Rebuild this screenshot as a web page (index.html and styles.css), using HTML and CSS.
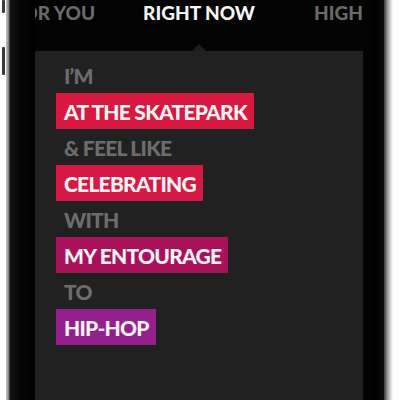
FILE: index.html
```html
<!DOCTYPE html>
<html>
<head>
<meta charset="utf-8">
<link rel="stylesheet" href="styles.css">
</head>
<body>
<div class="phone">
  <div class="btn btn-a"></div>
  <div class="btn btn-b"></div>
  <div class="edge-left"></div>
  <div class="bezel-left"></div>
  <div class="screen">
    <div class="header">
      <div class="tab-side tab-left"><span class="tab">FOR YOU</span></div>
      <div class="tab tab-active">RIGHT NOW</div>
      <div class="tab-side tab-right"><span class="tab">HIGHLIGHTS</span></div>
      <div class="pointer"></div>
    </div>
    <div class="content">
      <div class="row plain">I’M</div>
      <div class="row"><span class="chip red">AT THE SKATEPARK</span></div>
      <div class="row plain">&amp; FEEL LIKE</div>
      <div class="row"><span class="chip red2">CELEBRATING</span></div>
      <div class="row plain">WITH</div>
      <div class="row"><span class="chip berry">MY ENTOURAGE</span></div>
      <div class="row plain">TO</div>
      <div class="row"><span class="chip purple">HIP-HOP</span></div>
    </div>
  </div>
  <div class="bezel-right"></div>
  <div class="edge-right"></div>
</div>
</body>
</html>
```

FILE: styles.css
```css
html, body {
  margin: 0;
  padding: 0;
  background: #ffffff;
  overflow: hidden;
}

.phone {
  position: relative;
  display: flex;
  margin-left: 6px;
  width: 387px;
  height: 400px;
}

.btn {
  position: absolute;
  left: -4px;
  width: 3px;
  background: #3a3a3a;
  border-radius: 1px;
}
.btn-a { top: 0; height: 13px; }
.btn-b { top: 47px; height: 28px; }

.edge-left {
  width: 4px;
  background: linear-gradient(to right, #c8c8c8, #8a8a8a 60%, #2a2a2a);
}
.bezel-left {
  width: 25px;
  background: linear-gradient(to right, #151515, #050505 40%, #000000);
}
.bezel-right {
  width: 21px;
  background: linear-gradient(to right, #050505, #000000 60%, #0c0c0c);
}
.edge-right {
  width: 9px;
  background: linear-gradient(to right, #3a3a3a, #9a9a9a 40%, #d8d8d8 75%, #ffffff);
}

.screen {
  width: 328px;
  display: flex;
  flex-direction: column;
  background: #212121;
  overflow: hidden;
  font-family: Lato, "Liberation Sans", sans-serif;
  font-weight: 900;
}

.header {
  position: relative;
  height: 51px;
  background: #030303;
  display: flex;
  align-items: flex-start;
  padding-top: 1px;
  box-sizing: border-box;
}

.tab {
  font-size: 19px;
  line-height: 23px;
  white-space: nowrap;
  color: #6a6a6a;
}
.tab-active {
  color: #f4f4f4;
  flex: none;
}
.tab-side {
  flex: 1 1 0;
  min-width: 0;
  display: flex;
  overflow: hidden;
}
.tab-left {
  justify-content: flex-end;
}
.tab-left .tab {
  margin-right: 48px;
}
.tab-right {
  justify-content: flex-start;
}
.tab-right .tab {
  margin-left: 59px;
}

.pointer {
  position: absolute;
  left: 157px;
  bottom: 0;
  width: 0;
  height: 0;
  border-left: 7px solid transparent;
  border-right: 7px solid transparent;
  border-bottom: 7px solid #1d1d1d;
}

.content {
  display: flex;
  flex-direction: column;
  align-items: flex-start;
  padding: 6px 0 0 21px;
}

.row {
  height: 36px;
  display: flex;
  align-items: center;
  font-size: 21px;
  letter-spacing: -0.75px;
  white-space: nowrap;
}

.plain {
  color: #6d6d6d;
  padding-left: 8px;
}

.chip {
  height: 36px;
  display: flex;
  align-items: center;
  padding: 0 7px 0 8px;
  color: #f6f2f4;
}
.red { background: #d9183f; }
.red2 { background: #d51944; }
.berry { background: #a9115a; }
.purple { background: #93208d; }
```
